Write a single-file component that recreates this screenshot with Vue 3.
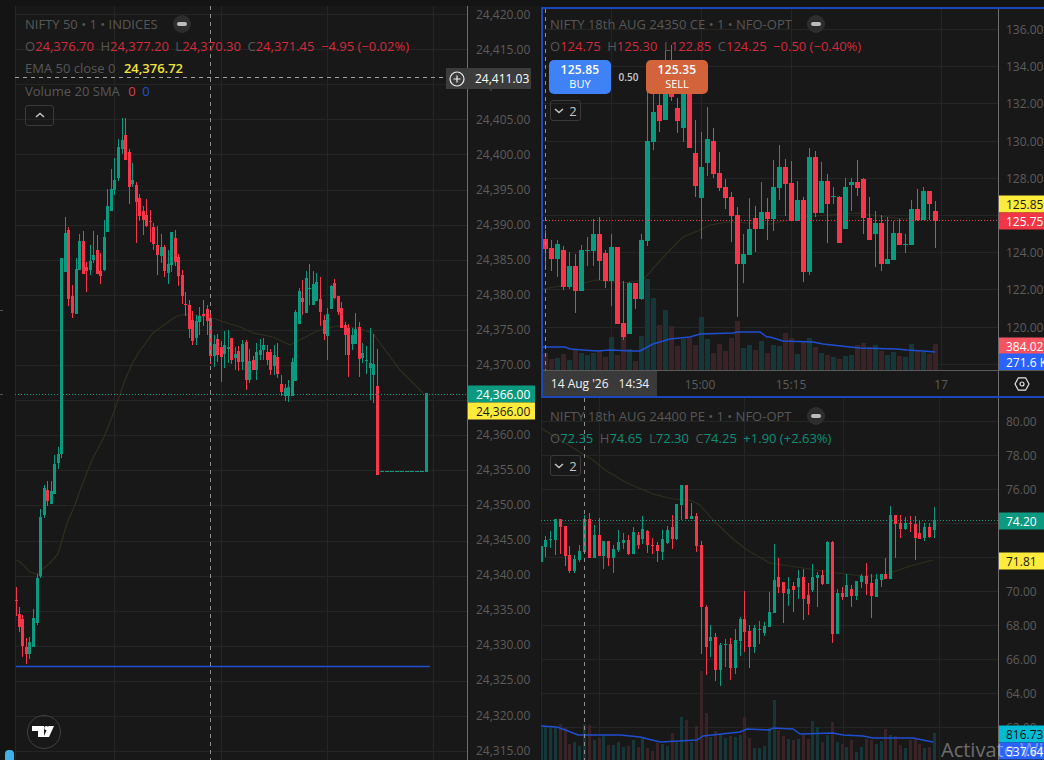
<template>
  <div class="page">
    <div class="rail">
      <span class="rail-tick tick-a"></span>
      <span class="rail-tick tick-b"></span>
      <span class="rail-pill"></span>
    </div>

    <section
      v-for="pane in panes"
      :key="pane.id"
      class="pane"
      :class="'pane-' + pane.id"
    >
      <div class="plot">
        <svg
          class="chart"
          :viewBox="`${pane.x} ${pane.y} ${pane.w} ${pane.h}`"
          preserveAspectRatio="none"
          shape-rendering="crispEdges"
        >
          <line
            v-for="gx in pane.gridX"
            :key="'gx' + gx"
            :x1="gx + 0.5"
            :x2="gx + 0.5"
            :y1="pane.y"
            :y2="pane.y + pane.h"
            class="grid"
          />
          <line
            v-for="gy in pane.gridY"
            :key="'gy' + gy"
            :x1="pane.x"
            :x2="pane.x + pane.w"
            :y1="Math.round(gy) + 0.5"
            :y2="Math.round(gy) + 0.5"
            class="grid"
          />

          <!-- volume -->
          <rect
            v-for="bar in pane.bars"
            :key="'v' + bar.x"
            :x="bar.x - pane.bodyW / 2"
            :y="bar.top"
            :width="pane.bodyW"
            :height="pane.y + pane.h - bar.top"
            :fill="bar.up ? '#16373a' : '#3a2326'"
          />

          <polyline class="ema" :points="pane.ema" />

          <!-- candles -->
          <g v-for="c in pane.candles" :key="'c' + c.x" :fill="c.up ? green : red">
            <rect :x="c.x - 0.5" :y="c.hi" width="1" :height="c.lo - c.hi" />
            <rect
              :x="c.x - pane.bodyW / 2"
              :y="c.top"
              :width="pane.bodyW"
              :height="Math.max(c.bot - c.top, 1)"
            />
          </g>

          <polyline v-if="pane.volAvg" class="vol-avg" :points="pane.volAvg" />
          <line
            v-if="pane.id === 'main'"
            class="vol-avg"
            x1="16"
            x2="430"
            y1="666.5"
            y2="666.5"
          />
          <line
            v-if="pane.id === 'main'"
            x1="380"
            x2="425"
            y1="471.5"
            y2="471.5"
            :stroke="green"
            stroke-dasharray="4 1"
          />

          <line
            class="dots"
            :stroke="pane.lineColor"
            :x1="pane.x"
            :x2="pane.x + pane.w"
            :y1="pane.lineY + 0.5"
            :y2="pane.lineY + 0.5"
          />
          <line
            class="cross"
            :x1="pane.crossX + 0.5"
            :x2="pane.crossX + 0.5"
            :y1="pane.y"
            :y2="pane.y + pane.h"
          />
          <line
            v-if="pane.id === 'main'"
            class="cross cross-h"
            :x1="pane.x"
            :x2="pane.x + pane.w"
            y1="77.5"
            y2="77.5"
          />
        </svg>

        <div class="legend">
          <div class="legend-row title-row">
            <span class="muted">{{ pane.title }}</span>
            <span class="eye-chip"><i></i></span>
          </div>
          <div class="legend-row ohlc" :class="pane.tone">
            <span v-for="item in pane.ohlc" :key="item[0]" class="ohlc-item">
              <b>{{ item[0] }}</b>{{ item[1] }}
            </span>
            <span>{{ pane.change }}</span>
          </div>

          <template v-if="pane.id === 'main'">
            <div class="legend-row">
              <span class="muted">EMA 50 close 0</span>
              <span class="ema-val">24,376.72</span>
            </div>
            <div class="legend-row">
              <span class="muted">Volume 20 SMA</span>
              <span class="vol-red">0</span>
              <span class="vol-blue">0</span>
            </div>
          </template>

          <div v-if="pane.id === 'opt1'" class="trade">
            <div class="trade-btn buy"><strong>125.85</strong><span>BUY</span></div>
            <span class="spread">0.50</span>
            <div class="trade-btn sell"><strong>125.35</strong><span>SELL</span></div>
          </div>

          <button v-if="pane.id === 'main'" class="fold fold-up" type="button">
            <svg width="10" height="6" viewBox="0 0 10 6"><path d="M1 5l4-3.6L9 5" /></svg>
          </button>
          <button v-else class="fold" type="button">
            <svg width="10" height="6" viewBox="0 0 10 6"><path d="M1 1l4 3.6L9 1" /></svg>
            <span>2</span>
          </button>
        </div>

        <div v-if="pane.id === 'main'" class="tv-logo">
          <svg width="24" height="13" viewBox="0 0 24 13">
            <path d="M0 0h12v11H6V5H0z" fill="#fff" />
            <circle cx="14.3" cy="2.1" r="2.1" fill="#fff" />
            <path d="M16.5 0H22l-5 11h-5.5z" fill="#fff" />
          </svg>
        </div>
      </div>

      <div class="axis">
        <span
          v-for="tick in pane.ticks"
          :key="tick.text"
          class="tick"
          :style="{ top: tick.y - pane.y + 'px' }"
        >{{ tick.text }}</span>
        <span
          v-for="tag in pane.tags"
          :key="tag.text + tag.y"
          class="tag"
          :style="{ top: tag.y - pane.y + 'px', background: tag.bg, color: tag.color }"
        >{{ tag.text }}</span>
      </div>

      <template v-if="pane.id === 'opt1'">
        <div class="time-axis">
          <span class="time-tag"><span>14 Aug '26</span><span>14:34</span></span>
          <span
            v-for="t in timeLabels"
            :key="t.text"
            class="time-label"
            :style="{ left: t.x - pane.x + 'px' }"
          >{{ t.text }}</span>
        </div>
        <div class="corner">
          <svg width="16" height="16" viewBox="0 0 16 16">
            <path d="M4.4 1.8h7.2L15 8l-3.4 6.2H4.4L1 8z" />
            <circle cx="8" cy="8" r="2" />
          </svg>
        </div>
      </template>

      <div v-if="pane.id === 'main'" class="cross-tag">
        <svg width="16" height="16" viewBox="0 0 16 16">
          <circle cx="8" cy="8" r="7" />
          <path d="M8 4.5v7M4.5 8h7" />
        </svg>
        <span>24,411.03</span>
      </div>
    </section>

    <span class="watermark">Activate Windows</span>
  </div>
</template>

<script setup>
const green = '#0b9a80'
const red = '#f7364b'

// [x, high, low, bodyTop, bodyBottom, up] in page pixels
const niftyCandles = [
  [16.5,587,616,600,601,0],[19.5,607,632,614,627,0],[22.5,615,657,619,646,0],[26.5,638,664,647,654,0],
  [29.5,637,659,642,654,1],[33.5,609,647,618,647,1],[37.5,574,625,578,623,1],[40.5,509,578,517,576,1],
  [44.5,485,518,488,515,1],[47.5,481,506,490,501,0],[51.5,481,504,491,504,1],[54.5,455,494,464,494,1],
  [58.5,447,469,454,463,1],[61.5,258,458,258,454,1],[65.5,217,272,233,272,1],[68.5,227,306,230,299,0],
  [72.5,285,318,296,313,0],[76.5,258,314,269,314,1],[79.5,234,270,241,270,1],[83.5,231,274,241,274,0],
  [86.5,262,292,267,271,0],[90.5,245,275,261,270,1],[93.5,231,263,255,260,1],[97.5,235,274,250,274,0],
  [100.5,253,284,271,276,0],[104.5,220,271,237,270,1],[107.5,189,232,206,232,1],[111.5,169,211,189,211,1],
  [114.5,158,195,180,190,1],[118.5,139,181,147,178,1],[122.5,118,154,140,149,1],[125.5,118,160,135,160,0],
  [129.5,149,204,152,187,0],[132.5,163,187,180,184,1],[136.5,182,243,185,202,0],[139.5,194,221,198,216,0],
  [143.5,206,235,211,220,0],[146.5,199,227,215,226,0],[150.5,210,242,221,222,0],[153.5,223,250,227,244,0],
  [157.5,226,275,245,255,0],[161.5,234,263,247,256,1],[164.5,245,277,247,271,0],[168.5,250,284,264,273,1],
  [171.5,232,272,232,265,1],[175.5,230,266,238,262,0],[178.5,254,286,257,276,0],[182.5,270,304,275,296,0],
  [185.5,292,316,304,305,0],[189.5,300,338,305,329,0],[192.5,311,345,320,341,0],[196.5,315,345,321,338,1],
  [199.5,307,335,316,322,1],[203.5,300,326,314,316,0],[207.5,305,335,309,321,0],[210.5,314,364,318,356,0],
  [214.5,335,367,344,356,1],[217.5,334,362,339,355,0],[221.5,341,382,347,357,0],[224.5,331,368,345,354,1],
  [228.5,330,363,347,349,1],[231.5,338,364,338,360,0],[235.5,347,370,354,358,1],[238.5,346,371,351,362,0],
  [242.5,340,370,344,362,1],[246.5,340,390,342,380,0],[249.5,349,383,361,380,1],[253.5,356,370,360,370,0],
  [256.5,343,380,352,370,1],[260.5,339,360,350,355,1],[263.5,338,360,345,350,1],[267.5,345,365,352,360,0],
  [270.5,349,375,352,370,0],[274.5,345,375,355,366,1],[277.5,343,378,357,374,0],[281.5,375,396,384,392,0],
  [285.5,384,401,388,396,1],[288.5,380,402,387,396,1],[292.5,358,396,362,396,1],[295.5,310,381,312,381,1],
  [299.5,288,324,291,324,1],[302.5,280,315,298,302,0],[306.5,271,313,278,313,1],[309.5,264,305,288,289,1],
  [313.5,271,305,284,305,1],[316.5,273,301,282,301,1],[320.5,277,326,299,312,0],[324.5,315,340,320,334,0],
  [327.5,308,360,314,336,1],[331.5,285,309,286,309,1],[334.5,279,299,283,298,0],[338.5,296,315,296,312,0],
  [341.5,302,328,308,328,0],[345.5,322,355,325,335,0],[348.5,324,377,328,355,0],[352.5,328,350,335,344,1],
  [355.5,313,344,329,344,1],[359.5,322,377,327,359,0],[362.5,343,363,353,358,1],[366.5,346,374,360,361,1],
  [370.5,328,400,363,368,1],[373.5,334,403,364,375,1],[377.5,349,475,386,475,0],[426.5,393,472,393,472,1]
]

// one candle every 6px starting at x=545.5: [high, low, bodyTop, bodyBottom, up, volumeTop]
const ceRows = [
  [230,270,239,249,0,353],[240,271,248,259,0,359],[240,277,244,259,1,358],[246,290,250,287,0,354],
  [252,289,266,287,1,360],[254,313,266,291,0,350],[245,291,250,291,1,353],[237,266,250,251,1,355],
  [219,266,234,251,1,353],[217,280,234,261,0,351],[250,288,253,281,0,357],[234,306,247,281,1,337],
  [247,324,247,324,0,355],[281,340,323,337,0,337],[282,334,283,334,1,349],[283,309,283,299,0,361],
  [234,300,240,299,1,336],[90,246,141,241,1,279],[92,150,112,142,1,298],[90,132,105,121,0,325],
  [50,120,93,120,1,310],[45,101,70,97,0,326],[98,133,108,121,0,346],[85,142,93,128,1,339],
  [70,148,80,148,0,338],[120,197,153,186,0,345],[132,239,167,198,1,317],[107,176,139,163,1,339],
  [128,178,141,174,0,353],[152,191,173,188,0,344],[179,209,187,198,0,351],[192,242,197,216,0,338],
  [207,317,215,264,0,321],[234,283,254,264,1,348],[198,255,229,255,1,345],[206,252,218,229,0,350],
  [182,229,212,229,1,341],[198,240,212,219,0,353],[160,231,187,219,1,345],[145,200,167,188,1,346],
  [159,216,167,184,0,333],[161,221,183,221,0,338],[181,221,200,221,1,354],[197,282,200,272,0,342],
  [148,275,157,272,1,338],[151,217,157,213,0,347],[162,213,181,213,1,353],[174,243,181,204,0,355],
  [187,204,196,197,1,357],[196,243,197,243,0,359],[178,229,187,229,1,356],[178,211,182,185,1,355],
  [160,196,182,188,0,345],[178,234,179,218,0,343],[197,240,218,240,0,347],[211,267,223,234,1,345],
  [215,271,223,264,0,351],[217,264,259,264,1,355],[221,260,233,260,1,352],[219,245,233,245,0,356],
  [234,253,244,245,1,357],[200,245,209,245,1,344],[189,221,209,220,0,350],[187,220,191,220,1,352],
  [191,220,191,204,0,354],[201,248,211,221,0,344]
]

// [x, high, low, bodyTop, bodyBottom, up, volumeTop]
const peRows = [
  [541.5,546,562,546,562,1,728],[545.5,536,557,540,547,1,727],[550.5,531,548,539,540,1,727],[555.5,519,555,519,540,1,727],
  [560.5,519,554,519,527,0,724],[565.5,526,566,526,556,0,728],[569.5,546,573,555,571,0,744],[574.5,555,573,559,571,1,742],
  [579.5,545,562,551,560,1,746],[584.5,515,552,519,552,1,724],[589.5,513,558,519,558,0,725],[594.5,525,558,535,558,1,740],
  [599.5,518,556,535,556,0,738],[603.5,541,569,541,556,1,736],[608.5,541,566,541,558,0,745],[613.5,545,573,549,558,1,745],
  [618.5,530,552,542,550,1,742],[623.5,533,549,540,543,1,747],[628.5,535,555,540,554,0,746],[633.5,527,554,532,554,1,740],
  [638.5,532,549,535,545,0,747],[642.5,516,544,529,539,1,738],[647.5,530,553,531,545,0,748],[652.5,538,554,545,546,0,751],
  [657.5,542,562,545,551,0,743],[662.5,530,560,539,552,1,744],[667.5,526,544,530,543,1,746],[672.5,515,549,527,539,0,733],
  [676.5,504,540,504,539,1,742],[681.5,485,520,485,505,1,717],[686.5,485,519,485,519,0,720],[691.5,503,519,516,519,1,742],
  [696.5,513,552,516,546,0,726],[701.5,541,654,545,607,0,671],[706.5,605,675,607,647,0,713],[710.5,625,657,637,641,1,737],
  [715.5,633,681,637,670,0,731],[720.5,643,686,645,670,1,734],[725.5,639,667,644,645,1,738],[730.5,638,680,644,668,0,736],
  [735.5,629,674,640,668,1,737],[740.5,617,656,619,641,1,735],[744.5,591,652,619,632,0,717],[749.5,625,668,631,647,0,738],
  [754.5,625,653,628,647,1,748],[759.5,621,644,629,630,1,748],[764.5,622,636,626,633,1,746],[769.5,592,627,612,627,1,728],
  [774.5,544,613,580,613,1,700],[778.5,558,593,577,587,0,730],[783.5,582,623,582,593,0,736],[788.5,577,606,589,594,1,739],
  [793.5,582,612,586,590,0,740],[798.5,570,599,578,587,1,739],[803.5,569,620,577,599,0,735],[808.5,583,615,595,604,0,739],
  [812.5,564,592,577,590,1,721],[817.5,572,607,575,578,1,727],[822.5,570,585,575,584,0,742],[827.5,541,584,542,584,1,735],
  [832.5,541,643,542,634,0,722],[837.5,589,634,593,634,1,742],[842.5,587,600,593,597,0,744],[846.5,574,597,585,597,1,747],
  [851.5,585,607,589,596,0,740],[856.5,581,600,581,596,1,752],[861.5,574,588,576,582,1,747],[866.5,563,595,576,584,0,739],
  [871.5,574,618,583,596,0,740],[876.5,574,597,579,597,1,744],[881.5,574,587,574,580,1,741],[885.5,558,579,574,579,0,729],
  [890.5,506,579,515,579,1,735],[895.5,515,558,515,524,0,736],[900.5,515,538,523,529,0,745],[905.5,517,530,523,529,1,748],
  [910.5,516,532,523,524,0,740],[915.5,516,560,524,538,0,738],[919.5,520,539,533,539,0,744],[924.5,523,541,527,538,1,748],
  [929.5,523,538,527,537,0,747],[934.5,507,538,520,530,1,733]
]

const toCandle = ([x, hi, lo, top, bot, up]) => ({ x, hi, lo, top, bot, up: !!up })
const toBar = (r) => ({ x: r[0], top: r[6], up: !!r[5] })
const ceCandles = ceRows.map((r, i) => [545.5 + 6 * i, ...r])

const steps = (start, step, count) =>
  Array.from({ length: count }, (_, i) => start + step * i)

const money = (n) =>
  n.toLocaleString('en-US', { minimumFractionDigits: 2, maximumFractionDigits: 2 })

const makeTicks = (firstValue, valueStep, firstY, yStep, count) =>
  steps(0, 1, count).map((i) => ({
    text: money(firstValue - valueStep * i),
    y: firstY + yStep * i
  }))

const panes = [
  {
    id: 'main',
    x: 15, y: 6, w: 452, h: 754,
    bodyW: 3,
    gridX: [15, 114, 221, 327, 433],
    gridY: steps(14, 35.1, 22),
    crossX: 210,
    lineY: 394,
    lineColor: green,
    candles: niftyCandles.map(toCandle),
    bars: [],
    ema: '16,560 20,562 30,572 37,574 43,569 50,563 58,554 67,523 75,505 79,493 92,460 104,437 112,417 125,380 132,364 139,352 153,333 168,322 177,316 187,314 200,316 213,318 227,323 240,327 253,333 273,337 290,345 300,340 317,331 337,326 357,328 373,333 380,343 400,370 423,393',
    volAvg: '',
    title: 'NIFTY 50 • 1 • INDICES',
    tone: 'down',
    ohlc: [['O', '24,376.70'], ['H', '24,377.20'], ['L', '24,370.30'], ['C', '24,371.45']],
    change: '−4.95 (−0.02%)',
    ticks: makeTicks(24420, 5, 13.5, 35.05, 22),
    tags: [
      { text: '24,366.00', y: 393.5, bg: green, color: '#fff' },
      { text: '24,366.00', y: 410.5, bg: '#ffeb3b', color: '#1a1a1a' }
    ]
  },
  {
    id: 'opt1',
    x: 543, y: 9, w: 455, h: 361,
    bodyW: 5,
    gridX: [611, 701, 791, 941],
    gridY: steps(29, 37.2, 10),
    crossX: 545,
    lineY: 220,
    lineColor: red,
    candles: ceCandles.map(toCandle),
    bars: ceCandles.map((r) => ({ x: r[0], top: r[6], up: !!r[5] })),
    ema: '543,289 560,286 583,283 597,280 623,283 643,280 658,263 670,250 683,237 700,230 710,225 727,222 770,224 803,217 827,215 857,213 880,216 903,219 930,218',
    volAvg: '543,347 565,347 570,349 583,350 597,351 610,350 633,351 640,351 653,344 670,339 690,337 700,334 733,333 738,332 760,332 767,337 770,337 783,341 813,342 823,344 850,347 860,348 897,349 907,350 923,351 935,352',
    title: 'NIFTY 18th AUG 24350 CE • 1 • NFO-OPT',
    tone: 'down',
    ohlc: [['O', '124.75'], ['H', '125.30'], ['L', '122.85'], ['C', '124.25']],
    change: '−0.50 (−0.40%)',
    ticks: makeTicks(136, 2, 29, 37.2, 9),
    tags: [
      { text: '125.85', y: 203.5, bg: '#ffeb3b', color: '#1a1a1a' },
      { text: '125.75', y: 220.5, bg: '#f23645', color: '#fff' },
      { text: '384.02', y: 345.5, bg: '#f7525f', color: '#fff' },
      { text: '271.6 K', y: 362, bg: '#2962ff', color: '#fff' }
    ]
  },
  {
    id: 'opt2',
    x: 541, y: 398, w: 457, h: 362,
    bodyW: 3,
    gridX: [541, 599, 744, 843, 939],
    gridY: steps(421, 34, 10),
    crossX: 584,
    lineY: 520,
    lineColor: green,
    candles: peRows.map(toCandle),
    bars: peRows.map(toBar),
    ema: '541,428 560,440 593,460 605,470 627,483 653,494 673,499 690,500 700,505 713,520 733,539 747,550 770,563 783,565 803,568 837,573 863,576 883,576 893,572 910,566 933,560',
    volAvg: '541,726 557,727 568,731 578,735 620,735 640,737 660,742 697,740 703,736 740,732 747,729 770,730 773,728 793,729 800,734 833,733 843,735 863,736 873,738 913,738 933,742',
    title: 'NIFTY 18th AUG 24400 PE • 1 • NFO-OPT',
    tone: 'up',
    ohlc: [['O', '72.35'], ['H', '74.65'], ['L', '72.30'], ['C', '74.25']],
    change: '+1.90 (+2.63%)',
    ticks: makeTicks(80, 2, 421, 34, 10),
    tags: [
      { text: '74.20', y: 520.5, bg: green, color: '#fff' },
      { text: '71.81', y: 560.5, bg: '#ffeb3b', color: '#1a1a1a' },
      { text: '816.73', y: 733.5, bg: '#00bcd4', color: '#111' },
      { text: '537.64', y: 751, bg: '#2962ff', color: '#fff' }
    ]
  }
]

const timeLabels = [
  { text: '15:00', x: 700 },
  { text: '15:15', x: 791 },
  { text: '17', x: 941 }
]
</script>

<style>
html,
body {
  margin: 0;
  background: #141414;
}
</style>

<style scoped>
.page {
  position: relative;
  width: 1044px;
  height: 760px;
  overflow: hidden;
  display: grid;
  grid-template-columns: 15px 525px 504px;
  grid-template-rows: 391px 362px;
  padding-top: 7px;
  box-sizing: border-box;
  background: #141414;
  font-family: 'Open Sans', 'Noto Sans', sans-serif;
  font-size: 12px;
  color: #5c5c5c;
}

/* left toolbar strip */
.rail {
  grid-row: 1 / 3;
  position: relative;
  margin-top: -1px;
}

.rail-tick {
  position: absolute;
  left: 0;
  width: 3px;
  height: 1px;
  background: #555;
}

.tick-a {
  top: 304px;
}

.tick-b {
  top: 388px;
}

.rail-pill {
  position: absolute;
  left: 5px;
  bottom: 0;
  width: 9px;
  height: 10px;
  border-radius: 4px 4px 0 0;
  background: #3fb0e8;
}

.pane {
  position: relative;
  display: grid;
  background: #181818;
  box-sizing: border-box;
}

.pane-main {
  grid-row: 1 / 3;
  margin-top: -1px;
  grid-template-columns: 452px 1fr;
  grid-template-rows: 754px;
}

.pane-opt1 {
  margin-left: 1px;
  border: solid #1c47b8;
  border-width: 2px 0 2px 2px;
  grid-template-columns: 455px 1fr;
  grid-template-rows: 361px 26px;
}

.pane-opt2 {
  margin-left: 1px;
  grid-template-columns: 457px 1fr;
  grid-template-rows: 362px;
}

.plot {
  position: relative;
  min-width: 0;
}

.chart {
  display: block;
  width: 100%;
  height: 100%;
}

.grid {
  stroke: #252525;
  stroke-width: 1;
}

.ema {
  fill: none;
  stroke: #302e1e;
  stroke-width: 1.2;
  shape-rendering: geometricPrecision;
}

.vol-avg {
  fill: none;
  stroke: #1f4fd0;
  stroke-width: 1.5;
  shape-rendering: geometricPrecision;
}

.dots {
  stroke-width: 1;
  stroke-dasharray: 1 2;
}

.cross {
  stroke: #8f8f8f;
  stroke-width: 1;
  stroke-dasharray: 4 4;
}

.cross-h {
  stroke: #a0a0a0;
}

/* legend overlay */
.legend {
  position: absolute;
  left: 7px;
  top: 4px;
  display: flex;
  flex-direction: column;
  align-items: flex-start;
  font-size: 13px;
  white-space: nowrap;
}

.pane-main .legend {
  left: 10px;
  top: 6.5px;
}

.pane-opt2 .legend {
  left: 9px;
  top: 7px;
}

.legend-row {
  display: flex;
  align-items: center;
  gap: 6.5px;
  height: 22px;
}

.pane-main .legend-row {
  height: 22.3px;
}

.muted {
  color: #575757;
}

.legend .title-row {
  gap: 15px;
}

.eye-chip {
  display: flex;
  align-items: center;
  justify-content: center;
  width: 18px;
  height: 18px;
  border-radius: 50%;
  background: #2d2d2d;
}

.eye-chip i {
  display: block;
  width: 10px;
  height: 4px;
  border-radius: 2px;
  background: #bdbdbd;
}

.ohlc.down {
  color: #d42a3e;
}

.ohlc.up {
  color: #0a8f78;
}

.ohlc b {
  font-weight: 400;
  color: #575757;
}

.ema-val {
  margin-left: 2px;
  color: #f2e23a;
  font-weight: 600;
}

.vol-red {
  margin-left: 2px;
  color: #d9414f;
}

.vol-blue {
  color: #2150cf;
}

.fold {
  display: flex;
  align-items: center;
  justify-content: center;
  gap: 5px;
  margin-top: 6px;
  width: 31px;
  height: 21px;
  padding: 0;
  box-sizing: border-box;
  background: transparent;
  border: 1px solid #3a3a3a;
  border-radius: 3px;
  font: inherit;
  color: #c4c4c4;
}

.fold path {
  fill: none;
  stroke: #c4c4c4;
  stroke-width: 1.5;
}

.fold-up {
  width: 29px;
  margin-top: 3px;
}

.trade {
  display: flex;
  align-items: center;
  margin-top: 3px;
  margin-left: -1px;
}

.trade-btn {
  display: flex;
  flex-direction: column;
  align-items: center;
  justify-content: center;
  width: 62px;
  height: 34px;
  border-radius: 5px;
  color: #fff;
  font-size: 11px;
  line-height: 14px;
}

.trade-btn strong {
  font-size: 12px;
  font-weight: 600;
  letter-spacing: 0.2px;
}

.buy {
  background: #3f82f5;
}

.sell {
  background: #d2633a;
}

.spread {
  width: 35px;
  text-align: center;
  font-size: 10px;
  font-weight: 600;
  color: #c9c9c9;
}

.tv-logo {
  position: absolute;
  left: 12px;
  top: 709px;
  display: flex;
  align-items: center;
  justify-content: center;
  width: 34px;
  height: 34px;
  box-sizing: border-box;
  border: 1px solid #414141;
  border-radius: 50%;
}

/* price axis */
.axis {
  position: relative;
  border-left: 1px solid #6e6e6e;
  overflow: hidden;
}

.tick {
  position: absolute;
  left: 7px;
  transform: translateY(-50%);
  white-space: nowrap;
}

.pane-main .tick {
  left: 8px;
}

.tag {
  position: absolute;
  left: 0;
  right: 0;
  height: 17px;
  padding-left: 7px;
  line-height: 17px;
  transform: translateY(-50%);
  white-space: nowrap;
}

.pane-main .tag {
  right: 5px;
  padding-left: 8px;
}

.cross-tag {
  position: absolute;
  left: 431px;
  top: 62px;
  width: 85px;
  height: 21px;
  display: flex;
  align-items: center;
  gap: 10px;
  padding-left: 3px;
  box-sizing: border-box;
  background: #3c3c3c;
  color: #fff;
  font-weight: 500;
}

.cross-tag circle,
.cross-tag path {
  fill: none;
  stroke: #eee;
  stroke-width: 1.2;
}

/* time axis */
.time-axis {
  position: relative;
  border-top: 1px solid #5a5a5a;
}

.time-tag {
  position: absolute;
  left: 0;
  top: 0;
  bottom: 0;
  width: 114px;
  display: flex;
  align-items: center;
  justify-content: center;
  gap: 10px;
  background: #3a3a3a;
  color: #f0f0f0;
  font-weight: 500;
}

.time-label {
  position: absolute;
  top: 5px;
  transform: translateX(-50%);
}

.corner {
  display: flex;
  align-items: center;
  justify-content: center;
  border-top: 1px solid #5a5a5a;
  border-left: 1px solid #6e6e6e;
}

.corner path,
.corner circle {
  fill: none;
  stroke: #e4e4e4;
  stroke-width: 1.2;
}

.watermark {
  position: absolute;
  left: 941px;
  top: 736px;
  font-size: 20px;
  line-height: 28px;
  color: rgba(255, 255, 255, 0.38);
  white-space: nowrap;
  pointer-events: none;
}
</style>
